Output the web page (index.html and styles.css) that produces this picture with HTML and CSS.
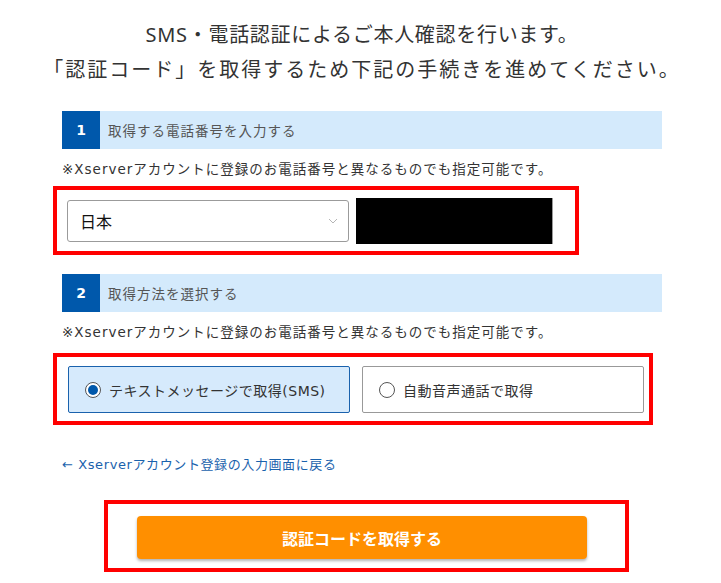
FILE: index.html
```html
<!DOCTYPE html>
<html lang="ja">
<head>
<meta charset="utf-8">
<title>SMS・電話認証</title>
<link rel="stylesheet" href="styles.css">
</head>
<body>
<main class="page">
  <h1 class="title"><span class="title-line title-line-1">SMS・電話認証によるご本人確認を行います。</span><span class="title-line title-line-2">「認証コード」を取得するため下記の手続きを進めてください。</span></h1>

  <section class="step step-1">
    <div class="step-head"><span class="step-num">1</span><span class="step-label">取得する電話番号を入力する</span></div>
    <p class="note">※Xserverアカウントに登録のお電話番号と異なるものでも指定可能です。</p>
    <div class="mark mark-phone">
      <div class="select">
        <span class="select-value">日本</span>
        <svg class="chev" width="10" height="6" viewBox="0 0 10 6"><path d="M1 1l4 4 4-4" fill="none" stroke="#b5b5b5" stroke-width="1"/></svg>
      </div>
      <div class="masked"></div>
    </div>
  </section>

  <section class="step step-2">
    <div class="step-head"><span class="step-num">2</span><span class="step-label">取得方法を選択する</span></div>
    <p class="note">※Xserverアカウントに登録のお電話番号と異なるものでも指定可能です。</p>
    <div class="mark mark-method">
      <label class="option option-on"><span class="radio radio-on"></span><span class="option-text">テキストメッセージで取得(SMS)</span></label>
      <label class="option"><span class="radio"></span><span class="option-text">自動音声通話で取得</span></label>
    </div>
  </section>

  <a class="back" href="#">← Xserverアカウント登録の入力画面に戻る</a>

  <div class="mark mark-submit">
    <button class="submit" type="button">認証コードを取得する</button>
  </div>
</main>
</body>
</html>
```

FILE: styles.css
```css
html, body {
  margin: 0;
  padding: 0;
  background: #fff;
}
body {
  font-family: "DejaVu Sans", "Noto Sans CJK JP", sans-serif;
  color: #333;
}
.page {
  width: 600px;
  margin-left: 62px;
  padding-top: 17px;
}
.title {
  margin: 0 -30px;
  font-family: "Noto Sans", "Noto Sans CJK JP", sans-serif;
  font-weight: 400;
  font-size: 20px;
  line-height: 35px;
  text-align: center;
  color: #333;
  white-space: nowrap;
}
.title-line {
  display: block;
}
.title-line-1 { letter-spacing: 0.7px; }
.title-line-2 { letter-spacing: 2px; }
.step-head {
  display: flex;
  height: 38px;
  background: #d4eafc;
  align-items: stretch;
}
.step-1 .step-head { margin-top: 24px; }
.step-2 .step-head { margin-top: 19px; }
.step-num {
  width: 38px;
  background: #0058ab;
  color: #fff;
  font-weight: 700;
  font-size: 14px;
  display: flex;
  align-items: center;
  justify-content: center;
}
.step-label {
  display: flex;
  align-items: center;
  padding-left: 8px;
  font-size: 13.5px;
  color: #555;
  font-family: "Noto Sans CJK JP", sans-serif;
  letter-spacing: 1px;
}
.note {
  margin: 10px 0 0;
  font-size: 13.5px;
  line-height: 21px;
  color: #333;
  letter-spacing: 1px;
  white-space: nowrap;
}
.mark {
  border: 4px solid #ff0000;
  box-sizing: border-box;
}
.mark-phone {
  margin: 6px 0 0 -9px;
  width: 526px;
  height: 69px;
  display: flex;
  align-items: center;
  gap: 7px;
  padding: 1px 0 0 10px;
}
.select {
  width: 282px;
  height: 42px;
  box-sizing: border-box;
  border: 1px solid #9b9b9b;
  border-radius: 3px;
  display: flex;
  align-items: center;
  justify-content: space-between;
  padding: 0 10px 0 12px;
}
.select-value {
  font-family: "Noto Sans CJK JP", sans-serif;
  font-size: 16px;
  color: #111;
}
.masked {
  width: 196px;
  height: 46px;
  background: #000;
  border-right: 1px solid #999;
}
.mark-method {
  margin: 10px 0 0 -9px;
  width: 600px;
  height: 72px;
  display: flex;
  align-items: center;
  gap: 12px;
  padding: 1px 0 0 11px;
}
.option {
  width: 282px;
  height: 47px;
  box-sizing: border-box;
  border: 1px solid #999;
  border-radius: 2px;
  display: flex;
  align-items: center;
  padding-left: 16px;
  gap: 8px;
  background: #fff;
}
.option-on {
  background: #d6eafc;
  border-color: #1a62ad;
}
.radio {
  width: 16px;
  height: 16px;
  border: 1px solid #555;
  border-radius: 50%;
  box-sizing: border-box;
  background: #fff;
  display: flex;
  align-items: center;
  justify-content: center;
}
.radio-on::after {
  content: "";
  width: 10px;
  height: 10px;
  border-radius: 50%;
  background: #0058ab;
}
.option-text {
  font-size: 14px;
  color: #333;
  letter-spacing: 0.5px;
}
.back {
  display: block;
  margin-top: 30px;
  font-size: 13px;
  line-height: 20px;
  color: #1a62ad;
  text-decoration: none;
  letter-spacing: 0.6px;
}
.mark-submit {
  margin: 25px 0 0 42px;
  width: 525px;
  height: 72px;
  padding: 12px 0 0 29px;
}
.submit {
  display: block;
  width: 450px;
  height: 43px;
  border: 0;
  border-radius: 4px;
  background: #ff8f00;
  color: #fff;
  font-family: "Noto Sans CJK JP", sans-serif;
  font-weight: 700;
  font-size: 16px;
  box-shadow: 0 2px 3px rgba(0,0,0,0.3);
}
```
